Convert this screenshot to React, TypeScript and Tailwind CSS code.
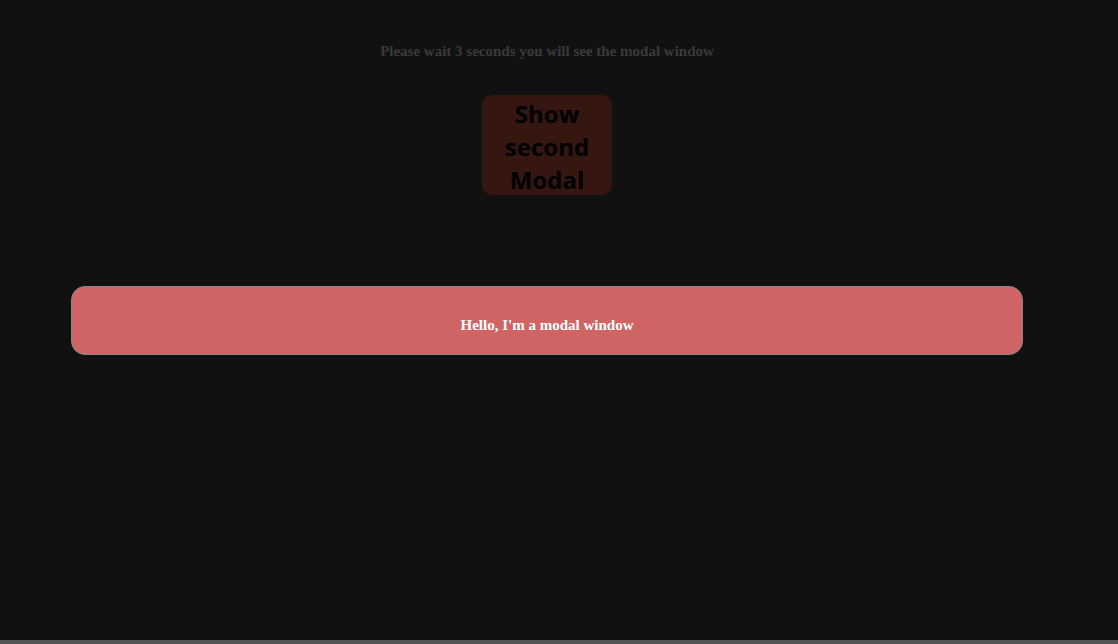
export default function App() {
  return (
    <div className="flex h-[644px] w-[1118px] flex-col bg-[#111111] overflow-hidden">
      <div className="flex w-[1094px] flex-1 flex-col items-center">
        <p
          className="mt-[43px] text-[15px] font-bold leading-[17px] text-[#3a3a3a]"
          style={{ fontFamily: '"Liberation Serif", serif' }}
        >
          Please wait 3 seconds you will see the modal window
        </p>
        <button
          className="mt-[35px] h-[100px] w-[130px] rounded-[10px] bg-[#351611] pt-[2px] text-[24px] font-bold leading-[33px] text-black"
          style={{ fontFamily: '"Open Sans", sans-serif' }}
        >
          Show second Modal
        </button>
        <div className="mt-[91px] flex h-[69px] w-[952px] items-center justify-center rounded-[14px] border border-[#8a8a8a] bg-[#d06464]">
          <span
            className="pt-[9px] text-[15px] font-bold leading-[17px] text-white"
            style={{ fontFamily: '"Liberation Serif", serif' }}
          >
            Hello, I'm a modal window
          </span>
        </div>
      </div>
      <div className="h-[4px] w-full bg-[#555555]" />
    </div>
  );
}
